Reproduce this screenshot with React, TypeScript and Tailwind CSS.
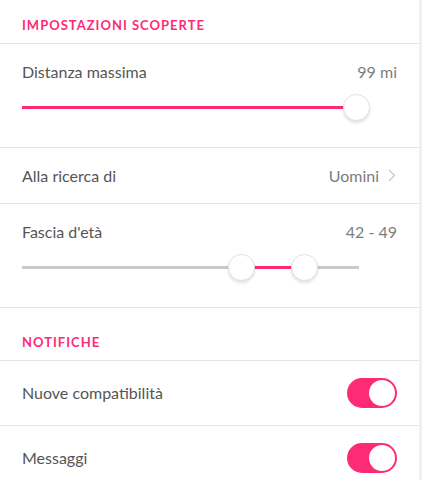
import React from "react";

function SectionHeader({ title, className }: { title: string; className: string }) {
  return (
    <div className={`px-[22px] border-b border-[#e5e5e5] ${className}`}>
      <h3 className="text-[13px] leading-[16px] font-bold tracking-[1px] text-[#fd2b76] uppercase">
        {title}
      </h3>
    </div>
  );
}

function Thumb({ left }: { left: number }) {
  return (
    <div
      className="absolute top-1/2 w-[27px] h-[27px] -mt-[14px] -ml-[13.5px] rounded-full bg-white border border-[#e2e2e2] shadow-[0_2px_3px_rgba(0,0,0,0.12)]"
      style={{ left }}
    />
  );
}

function Toggle() {
  return (
    <div className="w-[50px] h-[30px] rounded-full bg-[#fd2b76] flex items-center justify-end pr-[2px]">
      <div className="w-[26px] h-[26px] rounded-full bg-white" />
    </div>
  );
}

export default function App() {
  return (
    <div
      className="flex h-[480px] w-full bg-[#eff0f3] overflow-hidden"
      style={{ fontFamily: "Lato, 'Open Sans', sans-serif" }}
    >
      <div className="w-[419px] bg-white text-[16px]">
        <SectionHeader title="Impostazioni scoperte" className="pt-[17px] pb-[10px]" />

        {/* distance */}
        <div className="px-[22px] pt-[19px] pb-[26px] border-b border-[#e5e5e5]">
          <div className="flex justify-between leading-[18px]">
            <span className="text-[#555555]">Distanza massima</span>
            <span className="text-[#7d7d7d]">99 mi</span>
          </div>
          <div className="relative h-[27px] mt-[13px]">
            <div className="absolute left-0 top-[12px] h-[3px] w-[323px] bg-[#fd2b76]" />
            <Thumb left={334} />
          </div>
        </div>

        {/* looking for */}
        <div className="px-[22px] h-[56px] flex items-center justify-between border-b border-[#e5e5e5]">
          <span className="text-[#555555]">Alla ricerca di</span>
          <div className="flex items-center gap-[9px]">
            <span className="text-[#7d7d7d]">Uomini</span>
            <svg width="8" height="13" viewBox="0 0 8 13" fill="none" className="mr-[1px]">
              <path d="M1 1 L6.5 6.5 L1 12" stroke="#c8c8c8" strokeWidth="1.3" />
            </svg>
          </div>
        </div>

        {/* age */}
        <div className="px-[22px] pt-[19px] pb-[26px] border-b border-[#e5e5e5]">
          <div className="flex justify-between leading-[18px]">
            <span className="text-[#555555]">Fascia d'età</span>
            <span className="text-[#7d7d7d]">42 - 49</span>
          </div>
          <div className="relative h-[27px] mt-[13px]">
            <div className="absolute left-0 top-[12px] h-[3px] w-[337px] bg-[#cacaca]" />
            <div className="absolute left-[219px] top-[12px] h-[3px] w-[63px] bg-[#fd2b76]" />
            <Thumb left={219} />
            <Thumb left={282} />
          </div>
        </div>

        <SectionHeader title="Notifiche" className="pt-[26px] pb-[10px]" />

        <div className="px-[22px] h-[65px] flex items-center justify-between border-b border-[#e5e5e5]">
          <span className="text-[#555555]">Nuove compatibilità</span>
          <Toggle />
        </div>
        <div className="px-[22px] h-[65px] flex items-center justify-between border-b border-[#e5e5e5]">
          <span className="text-[#555555]">Messaggi</span>
          <Toggle />
        </div>
      </div>
    </div>
  );
}
